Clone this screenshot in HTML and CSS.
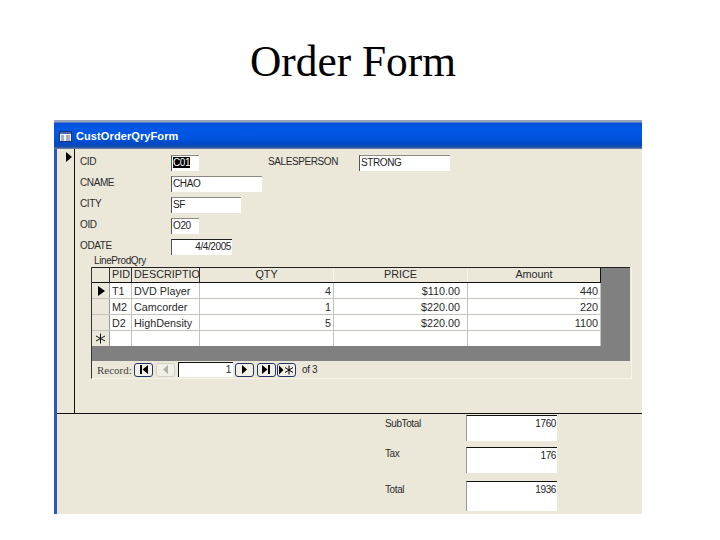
FILE: index.html
```html
<!DOCTYPE html>
<html lang="en">
<head>
<meta charset="utf-8">
<title>Order Form</title>
<link rel="stylesheet" href="styles.css">
</head>
<body>
<h1 class="slide-title">Order Form</h1>
<main class="window">
  <header class="titlebar">
    <svg class="win-icon" width="13" height="11" viewBox="0 0 13 11"><rect x="0.5" y="0.5" width="12" height="10" fill="#f2f5fb" stroke="#22346a"/><rect x="1" y="1" width="11" height="2" fill="#4a68b0"/><path d="M2 5h3M2 7h3M2 9h3M7 5h4M7 7h4M7 9h4" stroke="#5a6a9a"/></svg>
    <span>CustOrderQryForm</span>
  </header>
  <section class="detail">
    <div class="selector">
      <svg class="sel-arrow" width="6" height="10" viewBox="0 0 6 10"><path d="M0 0L6 5L0 10Z" fill="#000"/></svg>
    </div>
    <div class="fields">
      <div class="row">
        <span class="label">CID</span>
        <span class="input w-cid"><span class="selected">C01</span></span>
        <span class="label sales-label">SALESPERSON</span>
        <span class="input w-sales">STRONG</span>
      </div>
      <div class="row"><span class="label">CNAME</span><span class="input w-name">CHAO</span></div>
      <div class="row"><span class="label">CITY</span><span class="input w-city">SF</span></div>
      <div class="row"><span class="label">OID</span><span class="input w-cid">O20</span></div>
      <div class="row"><span class="label">ODATE</span><span class="input w-date">4/4/2005</span></div>
      <div class="sub-label">LineProdQry</div>
      <div class="subform">
        <div class="sheet">
          <div class="grid head">
            <div class="cell"></div><div class="cell tl">PID</div><div class="cell tl">DESCRIPTIO</div><div class="cell tc">QTY</div><div class="cell tc">PRICE</div><div class="cell tc last">Amount</div>
          </div>
          <div class="grid">
            <div class="cell mark"><svg width="7" height="10" viewBox="0 0 7 10"><path d="M0 0L7 5L0 10Z" fill="#000"/></svg></div><div class="cell tl">T1</div><div class="cell tl">DVD Player</div><div class="cell tr">4</div><div class="cell tr price">$110.00</div><div class="cell tr last">440</div>
          </div>
          <div class="grid">
            <div class="cell mark"></div><div class="cell tl">M2</div><div class="cell tl">Camcorder</div><div class="cell tr">1</div><div class="cell tr price">$220.00</div><div class="cell tr last">220</div>
          </div>
          <div class="grid">
            <div class="cell mark"></div><div class="cell tl">D2</div><div class="cell tl">HighDensity</div><div class="cell tr">5</div><div class="cell tr price">$220.00</div><div class="cell tr last">1100</div>
          </div>
          <div class="grid new">
            <div class="cell mark new-mark"><svg width="11" height="11" viewBox="0 0 11 11"><path d="M5.500 0.500v10M1 3l9 5M10 3l-9 5" stroke="#111" stroke-width="1" fill="none"/></svg></div><div class="cell"></div><div class="cell"></div><div class="cell"></div><div class="cell"></div><div class="cell last"></div>
          </div>
        </div>
        <div class="navbar">
          <span class="nav-label">Record:</span>
          <span class="nav-btn"><svg width="9" height="9" viewBox="0 0 9 9"><path d="M1 0h2v9H1zM9 0v9L3.500 4.500z"/></svg></span>
          <span class="nav-btn off"><svg width="9" height="9" viewBox="0 0 9 9"><path d="M7 0v9L2 4.500z"/></svg></span>
          <span class="nav-input">1</span>
          <span class="nav-btn"><svg width="9" height="9" viewBox="0 0 9 9"><path d="M2 0v9L7 4.500z"/></svg></span>
          <span class="nav-btn tight"><svg width="9" height="9" viewBox="0 0 9 9"><path d="M0 0v9L5.500 4.500zM6 0h2v9H6z"/></svg></span>
          <span class="nav-btn tight"><svg width="15" height="10" viewBox="0 0 15 10"><path d="M0 0.500v9L4.500 5z"/><path d="M10 0.500v9M6 2.500l8 5M14 2.500l-8 5" stroke="#000" stroke-width="1" fill="none"/></svg></span>
          <span class="nav-of">of 3</span>
        </div>
      </div>
    </div>
  </section>
  <section class="totals">
    <div class="total-row r1"><span class="label">SubTotal</span><span class="input total-box">1760</span></div>
    <div class="total-row r2"><span class="label">Tax</span><span class="input total-box">176</span></div>
    <div class="total-row r3"><span class="label">Total</span><span class="input total-box">1936</span></div>
  </section>
</main>
</body>
</html>
```
FILE: styles.css
```css
* { box-sizing: border-box; }
html, body { margin: 0; padding: 0; background: #fff; }
body { width: 720px; height: 540px; overflow: hidden; font-family: "Liberation Sans", Arial, sans-serif; }

.slide-title {
  margin: 0;
  height: 120px;
  padding: 34px 14px 0 0;
  font: 400 43.400px/54px "Liberation Serif", "Times New Roman", serif;
  text-align: center;
  color: #000;
}

.window {
  margin-left: 54px;
  width: 588px;
  height: 394px;
  background: #ebe8d9;
  border-left: 3px solid #2a58c0;
  font-size: 10px;
  letter-spacing: -0.4px;
  color: #2a2a2a;
}

.titlebar {
  margin-left: -3px;
  height: 29px;
  display: flex;
  align-items: center;
  gap: 4px;
  padding: 3px 0 0 5px;
  color: #fff;
  font-size: 11px;
  font-weight: 700;
  letter-spacing: 0.1px;
  background: linear-gradient(#9aa6b8 0, #9aa6b8 2px, #0a50d8 3px, #0058e6 8px, #0054e0 18px, #0048c4 24px, #1a4ea8 27px, #7a8ca8 29px);
}
.win-icon { flex: none; }

.detail { display: flex; height: 265px; border-bottom: 1px solid #111; }
.selector { width: 18px; flex: none; border-right: 1px solid #111; padding: 3px 0 0 9px; }
.sel-arrow { display: block; }

.fields { flex: 1; padding: 6px 0 0 5px; }

.row { display: flex; height: 21px; }
.label { width: 91px; flex: none; line-height: 14px; padding-top: 0; }
.input {
  display: block;
  height: 16px;
  background: #fff;
  border-top: 1px solid #8a8a80;
  border-left: 1px solid #555;
  padding: 0 0 0 1px;
  line-height: 14px;
  color: #222;
}
.selected { background: #000; color: #fff; }
.w-cid { width: 28px; }
.w-name { width: 91px; }
.w-city { width: 70px; }
.w-date { width: 61px; text-align: right; padding-right: 1px; border-top-color: #222; overflow: hidden; }
.w-sales { width: 91px; }
.sales-label { margin-left: 69px; }

.sub-label { margin: -5px 0 0 14px; height: 12px; line-height: 12px; }

.subform {
  margin: 0 0 0 11px;
  width: 541px;
  height: 112px;
  border-left: 1px solid #333;
  border-right: 1px solid #f6f4ea;
  border-bottom: 1px solid #f6f4ea;
}
.sheet { width: 538px; height: 94px; background: #808080; border-top: 1px solid #222; }

.grid {
  display: grid;
  grid-template-columns: 18px 22px 68px 134px 134px 132px;
  width: 508px;
  height: 16px;
  background: #fff;
  border-bottom: 1px solid #c4c4bc;
}
.cell {
  border-right: 1px solid #c4c4bc;
  padding: 0 2px;
  line-height: 17px;
  font-size: 10.800px;
  letter-spacing: 0;
  white-space: nowrap;
  overflow: hidden;
}
.cell.last { border-right: 0; }
.tl { text-align: left; }
.tr { text-align: right; }
.tc { text-align: center; }
.price { padding-right: 7px; }
.head { height: 15px; background: #ebe8d9; border-bottom: 1px solid #111; box-shadow: 1px 0 0 #111; }
.head .cell { border-right-color: #333; line-height: 13px; }
.head .cell.tc { border-right-color: #f6f4ea; }
.grid:not(.head) { box-shadow: 1px 0 0 #c4c4bc; }
.new { border-bottom: 0; height: 15px; }
.mark { background: #ebe8d9; border-right-color: #999; padding: 3px 0 0 6px; line-height: 0; }
.mark svg { display: block; }
.new-mark { padding: 2px 0 0 3px; }

.navbar { display: flex; align-items: center; height: 17px; padding-left: 5px; }
.nav-label { width: 37px; flex: none; font-family: "Liberation Serif", serif; font-size: 11px; letter-spacing: 0; color: #444; }
.nav-btn {
  width: 19px;
  height: 14px;
  margin-right: 3px;
  flex: none;
  display: flex;
  align-items: center;
  justify-content: center;
  background: #f2f0e6;
  border: 1px solid #25346a;
  border-radius: 3px;
}
.nav-btn svg { fill: #000; }
.nav-btn.off { border-color: #d4d2c6; }
.nav-btn.off svg { fill: #b4b2a8; }
.nav-btn.tight { margin-right: 1px; }
.nav-input {
  width: 55px;
  height: 15px;
  margin: 0 2px 0 0;
  flex: none;
  background: #fff;
  border-top: 1px solid #111;
  border-left: 1px solid #111;
  text-align: right;
  padding-right: 2px;
  line-height: 13px;
}
.nav-of { margin-left: 5px; }

.totals { padding: 1px 0 0 328px; display: flex; flex-direction: column; }
.total-row { display: flex; }
.total-row .label { width: 81px; }
.total-box {
  width: 91px;
  height: 100%;
  text-align: right;
  padding: 1px 1px 0 0;
  border-top: 1px solid #111;
  border-left: 1px solid #999;
}
.r1 { height: 26px; }
.r1 .label { padding-top: 2px; }
.r2 { height: 26px; margin-top: 6px; }
.r3 { height: 30px; margin-top: 8px; }
.r3 .label { padding-top: 2px; }
```
